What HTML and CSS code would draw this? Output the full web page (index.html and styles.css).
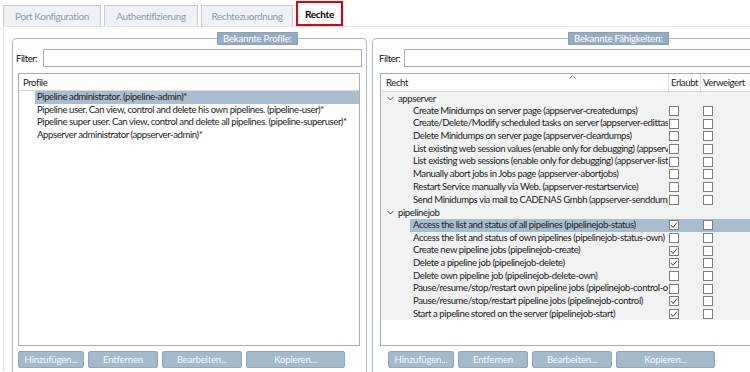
FILE: index.html
```html
<!DOCTYPE html>
<html lang="de">
<head>
  <meta charset="UTF-8" />
  <title>Rechte</title>
  <link rel="stylesheet" href="styles.css">
</head>
<body>
  <div class="tabs">
    <div class="tab tab-port">Port Konfiguration</div>
    <div class="tab tab-auth">Authentifizierung</div>
    <div class="tab tab-zuord">Rechtezuordnung</div>
    <div class="tab tab-rechte active">Rechte</div>
  </div>

  <div class="pane">
    <fieldset class="group group-profile">
      <legend>Bekannte Profile:</legend>
      <div class="filter">
        <label>Filter:</label>
        <input type="text" />
      </div>
      <div class="list">
        <div class="list-head">Profile</div>
        <div class="list-row selected">Pipeline administrator. (pipeline-admin)*</div>
        <div class="list-row">Pipeline user. Can view, control and delete his own pipelines. (pipeline-user)*</div>
        <div class="list-row">Pipeline super user. Can view, control and delete all pipelines. (pipeline-superuser)*</div>
        <div class="list-row">Appserver administrator (appserver-admin)*</div>
      </div>
      <div class="buttons">
        <button class="btn-add">Hinzufügen...</button>
        <button class="btn-del">Entfernen</button>
        <button class="btn-edit">Bearbeiten...</button>
        <button class="btn-copy">Kopieren...</button>
      </div>
    </fieldset>

    <fieldset class="group group-rights">
      <legend>Bekannte Fähigkeiten:</legend>
      <div class="filter">
        <label>Filter:</label>
        <input type="text" />
      </div>
      <div class="table">
        <div class="table-head">
          <div class="th th-name">Recht</div>
          <div class="th">Erlaubt</div>
          <div class="th">Verweigert</div>
          <svg class="sort" width="7" height="4" viewBox="0 0 7 4"><path d="M0.5 3.5 L3.5 0.5 L6.5 3.5" fill="none" stroke="#8a8a8a" stroke-width="1"/></svg>
        </div>
        <div class="rows">
          <div class="group-row">
            <svg class="chev" width="7" height="5" viewBox="0 0 7 5"><path d="M0.5 1 L3.5 4 L6.5 1" fill="none" stroke="#555" stroke-width="1"/></svg>
            appserver
          </div>
          <div class="item"><div class="cells"><span class="name">Create Minidumps on server page (appserver-createdumps)</span><span class="cb-cell"><span class="cb"></span></span><span class="cb-cell deny"><span class="cb"></span></span></div></div>
          <div class="item"><div class="cells"><span class="name">Create/Delete/Modify scheduled tasks on server (appserver-edittasks)</span><span class="cb-cell"><span class="cb"></span></span><span class="cb-cell deny"><span class="cb"></span></span></div></div>
          <div class="item"><div class="cells"><span class="name">Delete Minidumps on server page (appserver-cleardumps)</span><span class="cb-cell"><span class="cb"></span></span><span class="cb-cell deny"><span class="cb"></span></span></div></div>
          <div class="item"><div class="cells"><span class="name">List existing web session values (enable only for debugging) (appserver-listsessionvalues)</span><span class="cb-cell"><span class="cb"></span></span><span class="cb-cell deny"><span class="cb"></span></span></div></div>
          <div class="item"><div class="cells"><span class="name">List existing web sessions (enable only for debugging) (appserver-listsessions)</span><span class="cb-cell"><span class="cb"></span></span><span class="cb-cell deny"><span class="cb"></span></span></div></div>
          <div class="item"><div class="cells"><span class="name">Manually abort jobs in Jobs page (appserver-abortjobs)</span><span class="cb-cell"><span class="cb"></span></span><span class="cb-cell deny"><span class="cb"></span></span></div></div>
          <div class="item"><div class="cells"><span class="name">Restart Service manually via Web. (appserver-restartservice)</span><span class="cb-cell"><span class="cb"></span></span><span class="cb-cell deny"><span class="cb"></span></span></div></div>
          <div class="item"><div class="cells"><span class="name">Send Minidumps via mail to CADENAS Gmbh (appserver-senddumps)</span><span class="cb-cell"><span class="cb"></span></span><span class="cb-cell deny"><span class="cb"></span></span></div></div>

          <div class="group-row">
            <svg class="chev" width="7" height="5" viewBox="0 0 7 5"><path d="M0.5 1 L3.5 4 L6.5 1" fill="none" stroke="#555" stroke-width="1"/></svg>
            pipelinejob
          </div>
          <div class="item"><div class="cells selected"><span class="name">Access the list and status of all pipelines (pipelinejob-status)</span><span class="cb-cell"><span class="cb checked"><svg width="8" height="8" viewBox="0 0 8 8"><path d="M1 4 L3 6.5 L7 1.5" fill="none" stroke="#4b4b4b" stroke-width="1"/></svg></span></span><span class="cb-cell deny"><span class="cb"></span></span></div></div>
          <div class="item"><div class="cells"><span class="name">Access the list and status of own pipelines (pipelinejob-status-own)</span><span class="cb-cell"><span class="cb"></span></span><span class="cb-cell deny"><span class="cb"></span></span></div></div>
          <div class="item"><div class="cells"><span class="name">Create new pipeline jobs (pipelinejob-create)</span><span class="cb-cell"><span class="cb checked"><svg width="8" height="8" viewBox="0 0 8 8"><path d="M1 4 L3 6.5 L7 1.5" fill="none" stroke="#4b4b4b" stroke-width="1"/></svg></span></span><span class="cb-cell deny"><span class="cb"></span></span></div></div>
          <div class="item"><div class="cells"><span class="name">Delete a pipeline job (pipelinejob-delete)</span><span class="cb-cell"><span class="cb checked"><svg width="8" height="8" viewBox="0 0 8 8"><path d="M1 4 L3 6.5 L7 1.5" fill="none" stroke="#4b4b4b" stroke-width="1"/></svg></span></span><span class="cb-cell deny"><span class="cb"></span></span></div></div>
          <div class="item"><div class="cells"><span class="name">Delete own pipeline job (pipelinejob-delete-own)</span><span class="cb-cell"><span class="cb"></span></span><span class="cb-cell deny"><span class="cb"></span></span></div></div>
          <div class="item"><div class="cells"><span class="name">Pause/resume/stop/restart own pipeline jobs (pipelinejob-control-own)</span><span class="cb-cell"><span class="cb"></span></span><span class="cb-cell deny"><span class="cb"></span></span></div></div>
          <div class="item"><div class="cells"><span class="name">Pause/resume/stop/restart pipeline jobs (pipelinejob-control)</span><span class="cb-cell"><span class="cb checked"><svg width="8" height="8" viewBox="0 0 8 8"><path d="M1 4 L3 6.5 L7 1.5" fill="none" stroke="#4b4b4b" stroke-width="1"/></svg></span></span><span class="cb-cell deny"><span class="cb"></span></span></div></div>
          <div class="item"><div class="cells"><span class="name">Start a pipeline stored on the server (pipelinejob-start)</span><span class="cb-cell"><span class="cb checked"><svg width="8" height="8" viewBox="0 0 8 8"><path d="M1 4 L3 6.5 L7 1.5" fill="none" stroke="#4b4b4b" stroke-width="1"/></svg></span></span><span class="cb-cell deny"><span class="cb"></span></span></div></div>
        </div>
      </div>
      <div class="buttons">
        <button class="btn-add">Hinzufügen...</button>
        <button class="btn-del">Entfernen</button>
        <button class="btn-edit">Bearbeiten...</button>
        <button class="btn-copy">Kopieren...</button>
      </div>
    </fieldset>
  </div>
</body>
</html>
```

FILE: styles.css
```css
body {
  margin: 0;
  width: 750px;
  height: 372px;
  overflow: hidden;
  background-color: #fff;
  color: #1d1d1d;
  font-family: Lato, "Open Sans", sans-serif;
  font-size: 9.6px;
  letter-spacing: -0.43px;
}

/* tabs */

.tabs {
  display: flex;
  align-items: flex-end;
  gap: 3px;
  height: 26px;
  padding-left: 3px;
}

.tab {
  height: 21px;
  box-sizing: border-box;
  border: 1px solid #c3d0da;
  border-bottom: none;
  background-color: #eef2f5;
  color: #8d9cab;
  font-size: 10px;
  letter-spacing: -0.4px;
  display: flex;
  align-items: center;
  justify-content: center;
}

.tab-port { width: 98px; }
.tab-auth { width: 94px; }
.tab-zuord { width: 92px; }
.tab-rechte { width: 47px; }

.tab.active {
  height: 25px;
  border: 2px solid #e3000b;
  background-color: #fff;
  color: #000;
  font-weight: bold;
  letter-spacing: -0.3px;
}

/* main pane */

.pane {
  display: flex;
  gap: 5px;
  height: 345px;
  margin-left: 3px;
  padding: 5px 0 0 8px;
  border-top: 1px solid #e1e5e9;
  border-left: 1px dotted #c9cfd4;
}

.group {
  flex: none;
  margin: 0;
  min-width: 0;
  height: 360px;
  box-sizing: border-box;
  border: 1px solid #a9bccc;
  border-radius: 4px;
}

.group-profile {
  width: 355px;
  padding: 0 4px 0 3px;
}

.group-rights {
  width: 398px;
  padding: 0 4px 0 6px;
}

legend {
  height: 13px;
  line-height: 12px;
  padding: 0 5px;
  box-sizing: border-box;
  background-color: #94adc3;
  border: 1px solid #86a1b8;
  color: #fff;
  letter-spacing: -0.2px;
}

.group-profile legend { margin-left: 201px; }
.group-rights legend { margin-left: 189px; }

.filter {
  display: flex;
  align-items: center;
  height: 18px;
  margin-top: 4px;
}

.filter label {
  color: #111;
}

.group-profile .filter label { width: 27px; }
.group-rights .filter label { width: 25px; }

.filter input {
  flex: 1;
  min-width: 0;
  height: 18px;
  box-sizing: border-box;
  margin: 0;
  padding: 0;
  border: 1px solid #abadb3;
  background-color: #fff;
}

/* profile list */

.list {
  height: 273px;
  box-sizing: border-box;
  margin: 6px 2px 0 2px;
  border: 1px solid #adadad;
  background-color: #fff;
}

.list-head {
  height: 17px;
  line-height: 17px;
  box-sizing: border-box;
  padding-left: 4px;
  border-bottom: 1px solid #d8d8d8;
}

.list-row {
  height: 12.5px;
  line-height: 12.5px;
  margin-left: 16px;
  padding-left: 2px;
  white-space: nowrap;
}

.list-row.selected {
  background-color: #a8bdce;
}

/* rights table */

.table {
  height: 273px;
  box-sizing: border-box;
  margin: 6px 0 0 1px;
  border: 1px solid #adadad;
  background-color: #fff;
}

.table-head {
  position: relative;
  display: grid;
  grid-template-columns: 287px 32px 1fr;
  height: 17px;
  line-height: 17px;
  border-bottom: 1px solid #d8d8d8;
}

.th {
  padding-left: 2px;
  border-left: 1px solid #dedede;
}

.th-name {
  padding-left: 5px;
  border-left: none;
}

.sort {
  position: absolute;
  top: 1px;
  left: 188px;
}

.rows {
  background-color: #f1f2f2;
}

.group-row {
  display: flex;
  align-items: center;
  gap: 4px;
  height: 12.7px;
  padding-left: 6px;
}

.item {
  height: 12.7px;
  padding-left: 29px;
}

.cells {
  display: grid;
  grid-template-columns: 258px 32px 1fr;
  height: 100%;
  align-items: center;
}

.cells.selected {
  background-color: #a8bdce;
}

.name {
  padding-left: 3px;
  white-space: nowrap;
  overflow: hidden;
  line-height: 12.7px;
}

.cb-cell {
  display: flex;
  align-items: center;
  padding-left: 1px;
}

.cb-cell.deny {
  padding-left: 3px;
}

.cb {
  display: flex;
  align-items: center;
  justify-content: center;
  width: 10px;
  height: 10px;
  box-sizing: border-box;
  border: 1px solid #7d7d7d;
  background-color: #fff;
}

/* buttons */

.buttons {
  display: flex;
  gap: 4px;
  margin-top: 5px;
  margin-left: 2px;
}

.group-rights .buttons {
  margin-left: 9px;
}

.buttons button {
  height: 17px;
  margin: 0;
  padding: 0;
  border: 1px solid #8ea7bd;
  border-radius: 2px;
  background-color: #a3b9cc;
  color: #f6f8fa;
  font-family: inherit;
  font-size: 9.6px;
  letter-spacing: -0.2px;
}

.btn-add { width: 66px; }
.btn-del { width: 70px; }
.btn-edit { width: 80px; }
.btn-copy { width: 99px; }
```
